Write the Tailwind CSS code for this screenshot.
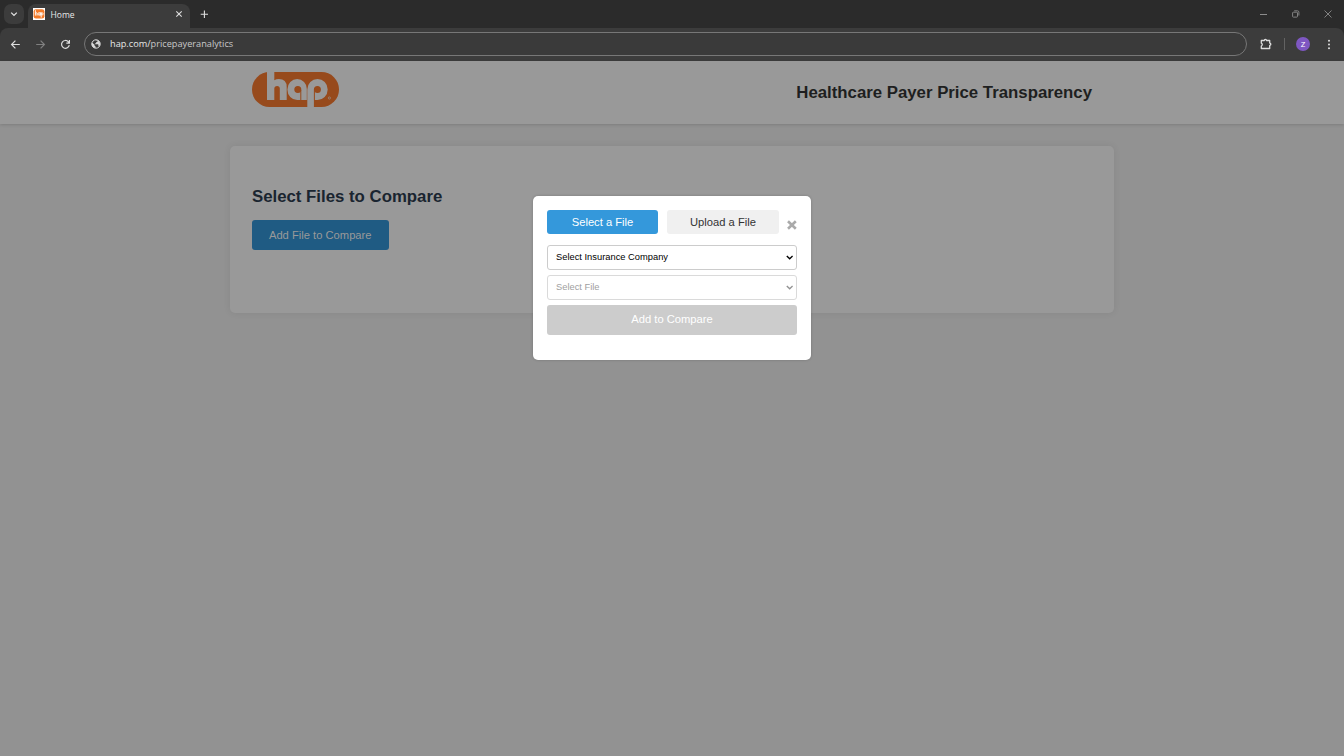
<!DOCTYPE html>
<html lang="en">
<head>
<meta charset="utf-8">
<title>Home</title>
<script src="https://cdn.jsdelivr.net/npm/@tailwindcss/browser@4"></script>
</head>
<body class="flex h-[756px] w-[1344px] flex-col overflow-hidden bg-[#929292] font-['Liberation_Sans',sans-serif]">

<!-- Browser chrome -->
<div class="flex h-7 shrink-0 bg-[#2b2b2b] font-['Open_Sans',sans-serif]">
  <div class="flex w-7 items-start pl-1 pt-1">
    <div class="flex size-5 items-center justify-center rounded-[7px] bg-[#3c3c3c]">
      <svg class="size-2" viewBox="0 0 8 8" fill="none" stroke="#e3e3e3" stroke-width="1.3"><path d="M1.2 2.6 4 5.4 6.8 2.6"/></svg>
    </div>
  </div>
  <div class="mt-1 flex h-6 w-[162px] items-center rounded-t-lg bg-[#3c3c3c] pb-1 pl-[5px] pr-[7px]">
    <svg class="h-3 w-3" viewBox="0 0 12 12"><path fill="#fff" d="M0 0h12v12H0z"/><rect x=".6" y="1.2" width="10.8" height="9.4" rx="2.4" fill="#f47b29"/><g fill="none" stroke="#fff" stroke-width=".9"><path d="M2.4 2.2v5.4M2.3 5.4q1.5-1.7 1.7.3v1.9M7.3 4.2v3.5M8.2 4.2v5.4"/><circle cx="6.1" cy="5.9" r="1.2"/><circle cx="9.2" cy="5.9" r="1"/></g></svg>
    <span class="ml-[5.5px] mt-px flex-1 text-[8.5px] leading-3 text-[#e8e8e8]">Home</span>
    <svg class="size-2" viewBox="0 0 8 8" fill="none" stroke="#dedede" stroke-width="1.1"><path d="m1.3 1.3 5.4 5.4m0-5.4L1.3 6.7"/></svg>
  </div>
  <div class="flex flex-1 items-center pl-2.5">
    <svg class="size-2" viewBox="0 0 8 8" fill="none" stroke="#dedede" stroke-width="1.1"><path d="M4.4.5v7.4M.7 4.2h7.4"/></svg>
  </div>
  <div class="flex items-center gap-6 pr-3 text-[#8c8c8c]">
    <svg class="size-2" viewBox="0 0 8 8" fill="none" stroke="currentColor" stroke-width="1"><path d="M0 4.5h7"/></svg>
    <svg class="size-2" viewBox="0 0 8 8" fill="none" stroke="currentColor" stroke-width=".9"><rect x=".6" y="2.2" width="4.9" height="4.9" rx=".7"/><path d="M2.2.8h3.2q1.5 0 1.5 1.5v3.2"/></svg>
    <svg class="size-2" viewBox="0 0 8 8" fill="none" stroke="currentColor" stroke-width=".9"><path d="m.5.5 7 7m0-7-7 7"/></svg>
  </div>
</div>
<div class="shrink-0 bg-[#2b2b2b] font-['Open_Sans',sans-serif]">
  <div class="flex h-[33px] items-center rounded-t-lg bg-[#3c3c3c] pb-px pl-2.5 pr-[10.5px]">
    <svg class="size-[11px]" viewBox="0 0 11 11" fill="none" stroke="#dedede" stroke-width="1.2"><path d="M9.8 5.5H1.6M5.4 1.7 1.6 5.5l3.8 3.8"/></svg>
    <svg class="ml-3.5 size-[11px]" viewBox="0 0 11 11" fill="none" stroke="#808080" stroke-width="1.2"><path d="M1.2 5.5h8.2M5.6 1.7l3.8 3.8-3.8 3.8"/></svg>
    <svg class="ml-3.5 size-[11px]" viewBox="0 0 11 11" fill="none" stroke="#dedede" stroke-width="1.2"><path d="M9.3 6.1A3.9 3.9 0 1 1 8.4 2.8L9.3 3.8M9.4 1v3.1H6.3"/></svg>
    <div class="ml-[13px] flex h-6 flex-1 items-center rounded-full border border-[#777] bg-[#3a3a3a] pl-1.5">
      <svg class="size-2.5" viewBox="0 0 10 10"><circle cx="5" cy="5" r="4.2" fill="#3c3c3c" stroke="#dadada"/><path fill="#dadada" d="M1 3.4 3.6 5.8v.9l1 .8v1.6Q1 8.8.7 5.2zM4.3.8Q7.6.5 8.9 3.4q.6 2.6-.8 4.1L7.3 6.6V5.3H4.2V4.2h1V3.1h1.2V1.8z"/></svg>
      <span class="ml-[9px] text-[9.2px] leading-3 text-[#e8e8e8]">hap.com/<span class="text-[#c9c9c9]">pricepayeranalytics</span></span>
    </div>
    <svg class="ml-[13px] size-3" viewBox="0 0 12 12" fill="none" stroke="#dedede" stroke-width="1.3" stroke-linejoin="round"><path d="M1.3 2.5h3a1.1 1.1 0 0 1 2.2 0h3.2v2.6a1.1 1.1 0 0 1 0 2.2v3.2H1.3V8a1.5 1.5 0 0 0 0-2.8z"/></svg>
    <div class="ml-3 h-3 w-px bg-[#636363]"></div>
    <div class="ml-[11px] flex size-3.5 items-center justify-center rounded-full bg-[#7e57c2] text-[8px] leading-none text-white">Z</div>
    <svg class="ml-[13.5px] h-[11px] w-2.5" viewBox="0 0 10 11" fill="#dedede"><circle cx="5" cy="1.7" r="1"/><circle cx="5" cy="5.5" r="1"/><circle cx="5" cy="9.3" r="1"/></svg>
  </div>
</div>

<!-- Page header -->
<header class="flex h-[63px] shrink-0 items-start justify-between bg-[#999] px-[252px] pt-[11px] shadow-[0_1px_3px_rgba(0,0,0,0.15)]">
  <svg class="h-[35px] w-[87px]" viewBox="0 0 87 35">
    <rect width="87" height="35" rx="17.5" fill="#974a1c"/>
    <g fill="#999">
      <path d="M15 0h7.3v8.2Q24.3 7 26.8 7q7.9 0 7.9 8v13h-6.9V16.5q0-2.6-2.7-2.6t-2.8 2.6V28H15z"/>
      <path fill-rule="evenodd" d="M45.2 7A9.6 9.6 0 0 1 54.8 16.8V28H45.2A9.8 10.5 0 0 1 45.2 7zM45.8 14a3.5 3.5 0 1 0 .01 7 3.5 3.5 0 0 0 0-7z"/>
      <path fill-rule="evenodd" d="M55.3 17.5A10.2 10.5 0 1 1 65.4 28h-3.5V35h-6.6zM65.4 14a3.5 3.5 0 1 0 .01 7 3.5 3.5 0 0 0 0-7z"/>
    </g>
    <path fill="#974a1c" d="M48.3 18h1V28h-1zM61.9 17.5h1V28h-1z"/>
    <circle cx="77.4" cy="26" r="1.1" fill="none" stroke="#999" stroke-width=".6"/>
  </svg>
  <h1 class="mt-[9px] text-[16.8px] font-bold leading-6 text-[#1e1f20]">Healthcare Payer Price Transparency</h1>
</header>

<!-- Page content -->
<main class="mx-[230px] mt-[22px] h-[167px] rounded-[5px] bg-[#999] px-[22px] pt-[38px] shadow-[0_0_7px_rgba(0,0,0,0.08)]">
  <h2 class="pt-px text-[16.8px] font-bold leading-6 text-[#1a2530]">Select Files to Compare</h2>
  <button class="mt-[11.4px] flex h-[29.5px] w-[136.5px] items-center justify-center rounded-[3px] bg-[#1f5b83] text-[11.2px] text-[#999]"><span class="inline-block origin-center scale-y-105">Add File to Compare</span></button>
</main>

<!-- File picker dialog -->
<div class="absolute left-[533px] top-[196px] h-[164px] w-[278px] rounded-[5px] bg-white px-3.5 pt-3.5 shadow-[0_0_3px_rgba(0,0,0,0.2)]">
  <div class="flex">
    <button class="h-6 w-[111px] rounded-[3px] bg-[#3498db] text-[11.2px] leading-6 text-white"><span class="inline-block scale-y-105">Select a File</span></button>
    <button class="ml-[9px] h-6 w-28 rounded-[3px] bg-[#f0f0f0] text-[11.2px] leading-6 text-[#333]"><span class="inline-block scale-y-105">Upload a File</span></button>
    <svg class="ml-2 mt-2.5 h-[10px] w-[10px]" viewBox="0 0 10 10" fill="none" stroke="#aaa" stroke-width="2.6"><path d="m1 1.2 7.8 7.6m0-7.6L1 8.8"/></svg>
  </div>
  <div class="mt-[11px] flex h-[25px] items-center justify-between rounded-[3px] border border-[#ccc] pl-2 pr-[3px] text-[9.33px] text-black">
    <span class="inline-block scale-y-105">Select Insurance Company</span>
    <svg class="h-[7px] w-[7px]" viewBox="0 0 7 7" fill="none" stroke="#000" stroke-width="1.4"><path d="m.8 2 2.9 2.7L6.6 2"/></svg>
  </div>
  <div class="mt-[5px] flex h-[25px] items-center justify-between rounded-[3px] border border-[#dadada] pl-2 pr-[3px] text-[9.33px] text-[#a0a0a0]">
    <span class="inline-block scale-y-105">Select File</span>
    <svg class="h-[7px] w-[7px]" viewBox="0 0 7 7" fill="none" stroke="#929292" stroke-width="1.4"><path d="m.8 2 2.9 2.7L6.6 2"/></svg>
  </div>
  <button class="mt-[5px] flex h-[29.5px] w-full items-center justify-center rounded-[3px] bg-[#ccc] text-[11.2px] text-white"><span class="inline-block scale-y-105">Add to Compare</span></button>
</div>
</body>
</html>
